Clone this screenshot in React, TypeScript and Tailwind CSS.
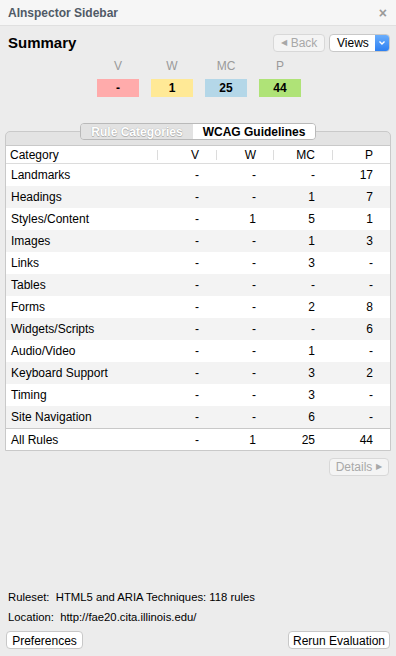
import React from 'react'

type Row = { name: string; v: string; w: string; mc: string; p: string }

const rows: Row[] = [
  { name: 'Landmarks', v: '-', w: '-', mc: '-', p: '17' },
  { name: 'Headings', v: '-', w: '-', mc: '1', p: '7' },
  { name: 'Styles/Content', v: '-', w: '1', mc: '5', p: '1' },
  { name: 'Images', v: '-', w: '-', mc: '1', p: '3' },
  { name: 'Links', v: '-', w: '-', mc: '3', p: '-' },
  { name: 'Tables', v: '-', w: '-', mc: '-', p: '-' },
  { name: 'Forms', v: '-', w: '-', mc: '2', p: '8' },
  { name: 'Widgets/Scripts', v: '-', w: '-', mc: '-', p: '6' },
  { name: 'Audio/Video', v: '-', w: '-', mc: '1', p: '-' },
  { name: 'Keyboard Support', v: '-', w: '-', mc: '3', p: '2' },
  { name: 'Timing', v: '-', w: '-', mc: '3', p: '-' },
  { name: 'Site Navigation', v: '-', w: '-', mc: '6', p: '-' },
]

const cols = 'grid grid-cols-[151px_59px_57px_59px_58px]'

function HeadCell({ label, first }: { label: string; first?: boolean }) {
  return (
    <div className="flex items-center h-full">
      {!first && <div className="w-px h-[10px] bg-[#dcdcdc]" />}
      <div className={first ? 'pl-[4px]' : 'flex-1 text-right pr-[17px]'}>{label}</div>
    </div>
  )
}

function TableRow({ r, alt, total }: { r: Row; alt: boolean; total?: boolean }) {
  return (
    <div
      className={`${cols} h-[22px] items-center ${alt ? 'bg-[#f3f3f3]' : 'bg-white'} ${
        total ? 'border-t border-[#c8c8c8]' : ''
      }`}
    >
      <div className="pl-[5px]">{r.name}</div>
      <div className="text-right pr-[17px]">{r.v}</div>
      <div className="text-right pr-[17px]">{r.w}</div>
      <div className="text-right pr-[17px]">{r.mc}</div>
      <div className="text-right pr-[17px]">{r.p}</div>
    </div>
  )
}

export default function App() {
  const counts = [
    { label: 'V', value: '-', bg: 'bg-[#ffabab]' },
    { label: 'W', value: '1', bg: 'bg-[#ffe996]' },
    { label: 'MC', value: '25', bg: 'bg-[#b4d7e8]' },
    { label: 'P', value: '44', bg: 'bg-[#afe377]' },
  ]

  return (
    <div
      className="w-[396px] h-[656px] flex flex-col bg-[#ececec] text-[12px] text-black overflow-hidden"
      style={{ fontFamily: '"Liberation Sans", Arial, sans-serif' }}
    >
      {/* title bar */}
      <div className="h-[26px] flex items-center justify-between pl-[8px] pr-[9px] bg-[#f6f6f6] border-b border-[#e0e0e0]">
        <span className="font-bold text-[12px] text-[#505a66]">AInspector Sidebar</span>
        <span className="text-[#9a9a9a] text-[14px] font-bold leading-none">×</span>
      </div>

      {/* summary header */}
      <div className="flex items-center justify-between pl-[8px] pr-[6px] mt-[8px] h-[18px]">
        <h1 className="text-[15px] font-bold">Summary</h1>
        <div className="flex items-center gap-[4px]">
          <button className="h-[18px] w-[52px] flex items-center justify-center gap-[4px] rounded-[4px] border border-[#d8d8d8] bg-[#f4f4f4] text-[#a8a8a8] text-[12px]">
            <span className="text-[8px]">◀</span>
            <span>Back</span>
          </button>
          <div className="h-[18px] w-[61px] flex rounded-[4px] border border-[#c8c8c8] bg-white overflow-hidden">
            <span className="flex-1 pl-[7px] text-[12px] leading-[16px]">Views</span>
            <span className="w-[14px] bg-gradient-to-b from-[#6aaefc] to-[#2b7ff2] flex items-center justify-center">
              <svg width="8" height="6" viewBox="0 0 8 6">
                <path d="M1.5 1.5 L4 4 L6.5 1.5" stroke="white" strokeWidth="1.4" fill="none" />
              </svg>
            </span>
          </div>
        </div>
      </div>

      {/* counts */}
      <div className="flex justify-center gap-[12px] pl-[2px] mt-[5px]">
        {counts.map((c) => (
          <div key={c.label} className="w-[42px] flex flex-col items-center">
            <div className="h-[17px] flex items-center text-[12px] text-[#9a9a9a]">{c.label}</div>
            <div
              className={`mt-[5px] w-[42px] h-[18px] flex items-center justify-center font-bold text-[12px] ${c.bg}`}
            >
              {c.value}
            </div>
          </div>
        ))}
      </div>

      {/* tabs + panel */}
      <div className="mx-[5px] mt-[34px] rounded-t-[5px] border border-[#c9c9c9] bg-[#e3e3e3] pt-[14px]">
        <div className="flex justify-center -mt-[23px] mb-[5px]">
          <div className="flex h-[17px] w-[236px] rounded-[4px] border border-[#b9b9b9] overflow-hidden text-[12px] font-bold">
            <div
              className="w-[112px] flex items-center justify-center bg-[#e2e2e2] text-white"
              style={{ textShadow: '0 0 1px #9a9a9a, 0 1px 0 #b8b8b8' }}
            >
              Rule Categories
            </div>
            <div className="flex-1 flex items-center justify-center bg-white">WCAG Guidelines</div>
          </div>
        </div>
        <div className="bg-white border-t border-[#c9c9c9]">
          <div className={`${cols} h-[18px] border-b border-[#dcdcdc]`}>
            <HeadCell label="Category" first />
            <HeadCell label="V" />
            <HeadCell label="W" />
            <HeadCell label="MC" />
            <HeadCell label="P" />
          </div>
          {rows.map((r, i) => (
            <TableRow key={r.name} r={r} alt={i % 2 === 1} />
          ))}
          <TableRow r={{ name: 'All Rules', v: '-', w: '1', mc: '25', p: '44' }} alt={false} total />
        </div>
      </div>

      <div className="flex justify-end pr-[7px] mt-[7px]">
        <button className="h-[18px] w-[60px] flex items-center justify-center gap-[4px] rounded-[4px] border border-[#d8d8d8] bg-[#f4f4f4] text-[#a8a8a8] text-[12px]">
          <span>Details</span>
          <span className="text-[8px]">▶</span>
        </button>
      </div>

      <div className="flex-1" />

      <div className="pl-[8px] text-[11.3px] leading-[20px]">
        <div>Ruleset:&nbsp; HTML5 and ARIA Techniques: 118 rules</div>
        <div>Location:&nbsp; http://fae20.cita.illinois.edu/</div>
      </div>

      <div className="flex justify-between px-[6px] mt-[4px] mb-[7px]">
        <button className="h-[18px] w-[77px] rounded-[4px] border border-[#c8c8c8] bg-white text-[12px]">
          Preferences
        </button>
        <button className="h-[18px] w-[102px] rounded-[4px] border border-[#c8c8c8] bg-white text-[12px]">
          Rerun Evaluation
        </button>
      </div>
    </div>
  )
}
